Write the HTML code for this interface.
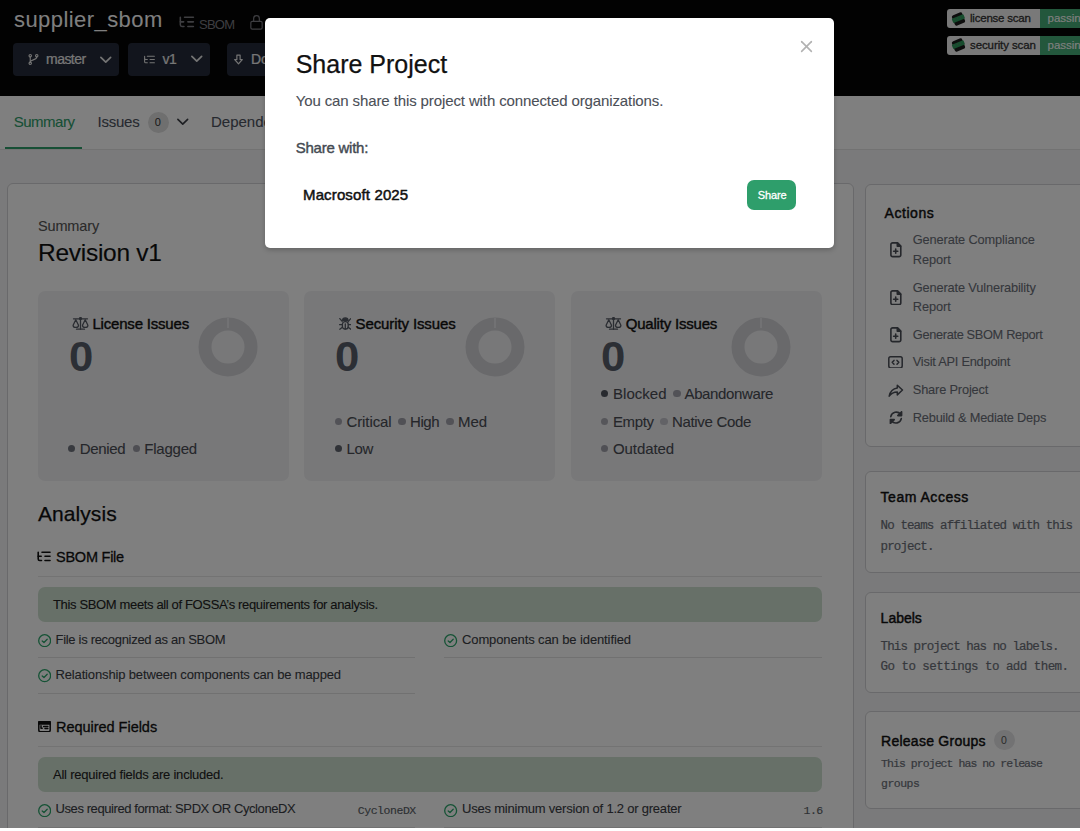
<!DOCTYPE html>
<html><head><meta charset="utf-8">
<style>
*{box-sizing:border-box;margin:0;padding:0}
html,body{width:1080px;height:831px;overflow:hidden;background:#fff;font-family:"Liberation Sans",sans-serif}
.abs{position:absolute}
.t{position:absolute;white-space:nowrap}
#page{position:absolute;left:0;top:0;width:1080px;height:828px;background:#f5f5f6;overflow:hidden}
#hdr{position:absolute;left:0;top:0;width:1080px;height:96px;background:#040404}
#tabs{position:absolute;left:0;top:96px;width:1080px;height:54px;background:#fff;border-bottom:1px solid #e4e4e4}
.card{position:absolute;background:#fff;border:1px solid #d2d2d6;border-radius:6px}
#ov{position:absolute;left:0;top:0;width:1080px;height:828px;background:rgba(0,0,0,.5)}
#modal{position:absolute;left:265px;top:18px;width:569px;height:230px;background:#fff;border-radius:5px;box-shadow:0 2px 5px rgba(0,0,0,.22)}
</style></head><body>
<div id="page">
<div id="hdr"></div><div id="tabs"></div>
<div class="card" style="left:7px;top:183px;width:847px;height:700px"></div>
<div class="card" style="left:865px;top:184px;width:240px;height:263px"></div>
<div class="card" style="left:865px;top:471px;width:240px;height:102px"></div>
<div class="card" style="left:865px;top:592px;width:240px;height:101px"></div>
<div class="card" style="left:865px;top:711px;width:240px;height:98px"></div>
<div class="abs" style="left:13px;top:43px;width:106px;height:33px;background:#252b3a;border-radius:4px"></div>
<div class="abs" style="left:128px;top:43px;width:82px;height:33px;background:#252b3a;border-radius:4px"></div>
<div class="abs" style="left:227px;top:43px;width:100px;height:33px;background:#252b3a;border-radius:4px"></div>
<div class="abs" style="left:946.5px;top:9.3px;width:140px;height:18.7px;background:#f2f2f2;border-radius:3px;overflow:hidden"></div>
<div class="abs" style="left:1040px;top:9.3px;width:60px;height:18.7px;background:#46ae78"></div>
<div class="abs" style="left:946.5px;top:36px;width:140px;height:18.6px;background:#f2f2f2;border-radius:3px"></div>
<div class="abs" style="left:1040px;top:36px;width:60px;height:18.6px;background:#46ae78"></div>
<div class="abs" style="left:5px;top:147px;width:77px;height:2px;background:#2e9e6b"></div>
<div class="abs" style="left:147.5px;top:111.5px;width:21px;height:21px;background:#dedede;border-radius:50%"></div>
<div class="abs" style="left:38px;top:290.6px;width:251px;height:190.4px;background:#f1f1f3;border-radius:7px"></div>
<div class="abs" style="left:304.3px;top:290.6px;width:251px;height:190.4px;background:#f1f1f3;border-radius:7px"></div>
<div class="abs" style="left:571px;top:290.6px;width:251px;height:190.4px;background:#f1f1f3;border-radius:7px"></div>
<div class="abs" style="left:68.0px;top:444.90000000000003px;width:7.4px;height:7.4px;background:#70757f;border-radius:50%"></div>
<div class="abs" style="left:132.70000000000002px;top:444.90000000000003px;width:7.4px;height:7.4px;background:#9c9ca6;border-radius:50%"></div>
<div class="abs" style="left:334.7px;top:417.90000000000003px;width:7.4px;height:7.4px;background:#a4a4ae;border-radius:50%"></div>
<div class="abs" style="left:398.2px;top:417.90000000000003px;width:7.4px;height:7.4px;background:#a0a0aa;border-radius:50%"></div>
<div class="abs" style="left:446.3px;top:417.90000000000003px;width:7.4px;height:7.4px;background:#a4a4ae;border-radius:50%"></div>
<div class="abs" style="left:334.7px;top:444.90000000000003px;width:7.4px;height:7.4px;background:#60656f;border-radius:50%"></div>
<div class="abs" style="left:601.0px;top:389.5px;width:7.4px;height:7.4px;background:#50555f;border-radius:50%"></div>
<div class="abs" style="left:673.3px;top:389.5px;width:7.4px;height:7.4px;background:#a4a4ae;border-radius:50%"></div>
<div class="abs" style="left:601.0px;top:417.90000000000003px;width:7.4px;height:7.4px;background:#acacb5;border-radius:50%"></div>
<div class="abs" style="left:660.3px;top:417.90000000000003px;width:7.4px;height:7.4px;background:#c4c4cc;border-radius:50%"></div>
<div class="abs" style="left:601.0px;top:444.90000000000003px;width:7.4px;height:7.4px;background:#a0a0aa;border-radius:50%"></div>
<div class="abs" style="left:38px;top:576px;width:784px;height:1px;background:#e6e6e6"></div>
<div class="abs" style="left:38px;top:586.5px;width:784px;height:35px;background:#cfe1d1;border-radius:7px"></div>
<div class="abs" style="left:38px;top:657px;width:377px;height:1px;background:#e3e3e3"></div>
<div class="abs" style="left:444px;top:657px;width:378px;height:1px;background:#e3e3e3"></div>
<div class="abs" style="left:38px;top:692.5px;width:377px;height:1px;background:#e3e3e3"></div>
<div class="abs" style="left:38px;top:746.4px;width:784px;height:1px;background:#e6e6e6"></div>
<div class="abs" style="left:38px;top:756.6px;width:784px;height:35px;background:#cfe1d1;border-radius:7px"></div>
<div class="abs" style="left:38px;top:826.6px;width:377px;height:1px;background:#e3e3e3"></div>
<div class="abs" style="left:444px;top:826.6px;width:378px;height:1px;background:#e3e3e3"></div>
<div class="abs" style="left:993.8px;top:729.7px;width:20.8px;height:20.8px;background:#e4e4e6;border-radius:50%"></div>
<svg class="abs" style="left:179px;top:15.8px;color:#7c7c82;" width="15.5" height="12.2" viewBox="0 0 14 11" fill="none" stroke="#7c7c82" stroke-width="1.4" stroke-linecap="round" stroke-linejoin="round"><path d="M5 1.2h8"/><path d="M8 5.3h5"/><path d="M8 9.5h5"/><path d="M1.2 1.2v6.8a1.5 1.5 0 0 0 1.5 1.5h1.8"/><path d="M1.2 5.3h3"/></svg>
<svg class="abs" style="left:248px;top:13px;color:#7c7c82;" width="17" height="18" viewBox="0 0 24 24" fill="none" stroke="#7c7c82" stroke-width="1.7" stroke-linecap="round" stroke-linejoin="round"><rect x="4" y="11" width="16" height="11" rx="2"/><path d="M8 11V7a4 4 0 0 1 8 0v4"/></svg>
<svg class="abs" style="left:27px;top:53px;color:#e8e8e8;" width="13" height="13" viewBox="0 0 24 24" fill="none" stroke="#e8e8e8" stroke-width="2.1" stroke-linecap="round" stroke-linejoin="round"><circle cx="6" cy="5" r="2.2"/><circle cx="6" cy="19" r="2.2"/><circle cx="18" cy="5" r="2.2"/><path d="M6 7.2v9.6"/><path d="M18 7.2c0 6.5-12 4.5-12 9.6"/></svg>
<svg class="abs" style="left:96.1px;top:50px;color:#e8e8e8;" width="19.5" height="19.5" viewBox="0 0 24 24" fill="none" stroke="#e8e8e8" stroke-width="2.1" stroke-linecap="round" stroke-linejoin="round"><path d="m6 9 6 6 6-6"/></svg>
<svg class="abs" style="left:142px;top:53px;color:#e8e8e8;" width="15" height="13" viewBox="0 0 24 24" fill="none" stroke="#e8e8e8" stroke-width="2" stroke-linecap="round" stroke-linejoin="round"><path d="M21 12h-8"/><path d="M21 6H8"/><path d="M21 18h-8"/><path d="M3 6v4c0 1.1.9 2 2 2h3"/><path d="M3 10v6c0 1.1.9 2 2 2h3"/></svg>
<svg class="abs" style="left:186.8px;top:49.4px;color:#e8e8e8;" width="19.5" height="19.5" viewBox="0 0 24 24" fill="none" stroke="#e8e8e8" stroke-width="2.1" stroke-linecap="round" stroke-linejoin="round"><path d="m6 9 6 6 6-6"/></svg>
<svg class="abs" style="left:232px;top:53px;color:#e8e8e8;" width="13" height="13" viewBox="0 0 24 24" fill="none" stroke="#e8e8e8" stroke-width="2.2" stroke-linecap="round" stroke-linejoin="round"><path d="M15 4v8h4l-7 8-7-8h4V4z"/></svg>
<svg class="abs" style="left:950.5px;top:11.5px" width="15" height="14" viewBox="0 0 15 14"><g transform="rotate(-22 7.5 7)"><rect x="2" y="1.5" width="11" height="11" rx="2" fill="#1a1a1a"/><rect x="1.2" y="4.2" width="12.6" height="4.8" rx="1" fill="#2f9a5c"/><circle cx="4" cy="5.8" r=".5" fill="#777"/><circle cx="7" cy="5.8" r=".5" fill="#777"/><circle cx="10" cy="6.8" r=".5" fill="#777"/></g></svg>
<svg class="abs" style="left:950.5px;top:38.2px" width="15" height="14" viewBox="0 0 15 14"><g transform="rotate(-22 7.5 7)"><rect x="2" y="1.5" width="11" height="11" rx="2" fill="#1a1a1a"/><rect x="1.2" y="4.2" width="12.6" height="4.8" rx="1" fill="#2f9a5c"/><circle cx="4" cy="5.8" r=".5" fill="#777"/><circle cx="7" cy="5.8" r=".5" fill="#777"/><circle cx="10" cy="6.8" r=".5" fill="#777"/></g></svg>
<svg class="abs" style="left:172.6px;top:111.5px;color:#3a3d44;" width="19.5" height="19.5" viewBox="0 0 24 24" fill="none" stroke="#3a3d44" stroke-width="2" stroke-linecap="round" stroke-linejoin="round"><path d="m6 9 6 6 6-6"/></svg>
<svg class="abs" style="left:71.8px;top:316.5px;color:#555a64;" width="17" height="13.5" viewBox="0 0 17 13.5" fill="none" stroke="#555a64" stroke-width="1.3" stroke-linecap="round" stroke-linejoin="round"><path d="M1.5 1.8h14"/><circle cx="8.5" cy="1.6" r="1" fill="currentColor"/><path d="M8.5 2.5v9.8"/><path d="M4.5 12.2h8"/><path d="M1.1 8.2L3.8 2.8L6.5 8.2a2.7 2.2 0 0 1-5.4 0Z"/><path d="M10.5 8.2L13.2 2.8L15.9 8.2a2.7 2.2 0 0 1-5.4 0Z"/></svg>
<svg class="abs" style="left:197.4px;top:315.5px" width="62" height="62" viewBox="0 0 62 62"><circle cx="31" cy="31" r="23" fill="none" stroke="#d3d3d7" stroke-width="13"/><line x1="31" y1="2" x2="31" y2="12" stroke="#f1f1f3" stroke-width="1.2"/></svg>
<svg class="abs" style="left:338.5px;top:316.5px;color:#555a64;" width="12.6" height="13.4" viewBox="0 0 12.6 13.4" fill="none" stroke="#555a64" stroke-width="1.3" stroke-linecap="round" stroke-linejoin="round"><path d="M3.6 3.3a2.7 2.4 0 0 1 5.4 0Z" fill="currentColor"/><rect x="3.4" y="4.6" width="5.8" height="7.4" rx="2.6"/><path d="M6.3 7v5"/><path d="M0.8 1.6l2.4 2.6"/><path d="M11.8 1.6l-2.4 2.6"/><path d="M0.6 7.6h2.6"/><path d="M12 7.6h-2.6"/><path d="M0.8 12.2l2.6-2"/><path d="M11.8 12.2l-2.6-2"/></svg>
<svg class="abs" style="left:463.6px;top:315.5px" width="62" height="62" viewBox="0 0 62 62"><circle cx="31" cy="31" r="23" fill="none" stroke="#d3d3d7" stroke-width="13"/><line x1="31" y1="2" x2="31" y2="12" stroke="#f1f1f3" stroke-width="1.2"/></svg>
<svg class="abs" style="left:604.5px;top:316.5px;color:#555a64;" width="17" height="13.5" viewBox="0 0 17 13.5" fill="none" stroke="#555a64" stroke-width="1.3" stroke-linecap="round" stroke-linejoin="round"><path d="M1.5 1.8h14"/><circle cx="8.5" cy="1.6" r="1" fill="currentColor"/><path d="M8.5 2.5v9.8"/><path d="M4.5 12.2h8"/><path d="M1.1 8.2L3.8 2.8L6.5 8.2a2.7 2.2 0 0 1-5.4 0Z"/><path d="M10.5 8.2L13.2 2.8L15.9 8.2a2.7 2.2 0 0 1-5.4 0Z"/></svg>
<svg class="abs" style="left:730.4px;top:315.5px" width="62" height="62" viewBox="0 0 62 62"><circle cx="31" cy="31" r="23" fill="none" stroke="#d3d3d7" stroke-width="13"/><line x1="31" y1="2" x2="31" y2="12" stroke="#f1f1f3" stroke-width="1.2"/></svg>
<svg class="abs" style="left:37.2px;top:550.5px;color:#111;" width="14" height="11" viewBox="0 0 14 11" fill="none" stroke="#111" stroke-width="1.6" stroke-linecap="round" stroke-linejoin="round"><path d="M5 1.2h8"/><path d="M8 5.3h5"/><path d="M8 9.5h5"/><path d="M1.2 1.2v6.8a1.5 1.5 0 0 0 1.5 1.5h1.8"/><path d="M1.2 5.3h3"/></svg>
<svg class="abs" style="left:37.9px;top:633.9px;color:#2aa56a;" width="13.3" height="13.3" viewBox="0 0 13.3 13.3" fill="none" stroke="#2aa56a" stroke-width="1.3" stroke-linecap="round" stroke-linejoin="round"><circle cx="6.65" cy="6.65" r="5.95"/><path d="M4.2 6.9l1.8 1.6l3.2-3.2"/></svg>
<svg class="abs" style="left:444.4px;top:633.9px;color:#2aa56a;" width="13.3" height="13.3" viewBox="0 0 13.3 13.3" fill="none" stroke="#2aa56a" stroke-width="1.3" stroke-linecap="round" stroke-linejoin="round"><circle cx="6.65" cy="6.65" r="5.95"/><path d="M4.2 6.9l1.8 1.6l3.2-3.2"/></svg>
<svg class="abs" style="left:37.9px;top:669.4px;color:#2aa56a;" width="13.3" height="13.3" viewBox="0 0 13.3 13.3" fill="none" stroke="#2aa56a" stroke-width="1.3" stroke-linecap="round" stroke-linejoin="round"><circle cx="6.65" cy="6.65" r="5.95"/><path d="M4.2 6.9l1.8 1.6l3.2-3.2"/></svg>
<svg class="abs" style="left:38px;top:720.5px;color:#111;" width="13" height="11.5" viewBox="0 0 13 11.5" fill="none" stroke="#111" stroke-width="1.5" stroke-linecap="round" stroke-linejoin="round"><rect x="0.8" y="0.8" width="11.4" height="9.9" rx="1.6"/><rect x="0.8" y="0.8" width="11.4" height="2.2" fill="currentColor"/><path d="M3 4.8v2.4h1.2"/><path d="M5.6 5.6h4.2"/><path d="M7 7.4h2.8"/></svg>
<svg class="abs" style="left:37.9px;top:803.5px;color:#2aa56a;" width="13.3" height="13.3" viewBox="0 0 13.3 13.3" fill="none" stroke="#2aa56a" stroke-width="1.3" stroke-linecap="round" stroke-linejoin="round"><circle cx="6.65" cy="6.65" r="5.95"/><path d="M4.2 6.9l1.8 1.6l3.2-3.2"/></svg>
<svg class="abs" style="left:444.4px;top:803.5px;color:#2aa56a;" width="13.3" height="13.3" viewBox="0 0 13.3 13.3" fill="none" stroke="#2aa56a" stroke-width="1.3" stroke-linecap="round" stroke-linejoin="round"><circle cx="6.65" cy="6.65" r="5.95"/><path d="M4.2 6.9l1.8 1.6l3.2-3.2"/></svg>
<svg class="abs" style="left:890px;top:242.0px;color:#4a4e57;" width="11.6" height="15.5" viewBox="0 0 11.6 15.5" fill="none" stroke="#4a4e57" stroke-width="1.6" stroke-linecap="round" stroke-linejoin="round"><path d="M7.6 0.9H2.6A1.7 1.7 0 0 0 0.9 2.6v10.3a1.7 1.7 0 0 0 1.7 1.7h6.5a1.7 1.7 0 0 0 1.7-1.7V4.1Z"/><path d="M7.3 1v3.3h3.3Z" fill="currentColor"/><path d="M3.6 9.2h4.2"/><path d="M5.7 7.1v4.2"/></svg>
<svg class="abs" style="left:890px;top:289.7px;color:#4a4e57;" width="11.6" height="15.5" viewBox="0 0 11.6 15.5" fill="none" stroke="#4a4e57" stroke-width="1.6" stroke-linecap="round" stroke-linejoin="round"><path d="M7.6 0.9H2.6A1.7 1.7 0 0 0 0.9 2.6v10.3a1.7 1.7 0 0 0 1.7 1.7h6.5a1.7 1.7 0 0 0 1.7-1.7V4.1Z"/><path d="M7.3 1v3.3h3.3Z" fill="currentColor"/><path d="M3.6 9.2h4.2"/><path d="M5.7 7.1v4.2"/></svg>
<svg class="abs" style="left:890px;top:327.0px;color:#4a4e57;" width="11.6" height="15.5" viewBox="0 0 11.6 15.5" fill="none" stroke="#4a4e57" stroke-width="1.6" stroke-linecap="round" stroke-linejoin="round"><path d="M7.6 0.9H2.6A1.7 1.7 0 0 0 0.9 2.6v10.3a1.7 1.7 0 0 0 1.7 1.7h6.5a1.7 1.7 0 0 0 1.7-1.7V4.1Z"/><path d="M7.3 1v3.3h3.3Z" fill="currentColor"/><path d="M3.6 9.2h4.2"/><path d="M5.7 7.1v4.2"/></svg>
<svg class="abs" style="left:888.2px;top:355.65px;color:#4a4e57;" width="15" height="12.7" viewBox="0 0 15 12.7" fill="none" stroke="#4a4e57" stroke-width="1.5" stroke-linecap="round" stroke-linejoin="round"><rect x="0.8" y="0.8" width="13.4" height="11.1" rx="1.8"/><path d="M6 4.4L4.2 6.35L6 8.3"/><path d="M9 4.4L10.8 6.35L9 8.3"/></svg>
<svg class="abs" style="left:888px;top:383.6px;color:#4a4e57;" width="15.7" height="13.4" viewBox="0 0 15.7 13.4" fill="none" stroke="#4a4e57" stroke-width="1.5" stroke-linecap="round" stroke-linejoin="round"><path d="M9.3 1.2v2.9C4.5 4.8 2 8.5 1.2 12.2c1.6-2.4 4.4-4.2 8.1-4.2v2.9l5.2-4.85Z"/></svg>
<svg class="abs" style="left:889px;top:411.0px;color:#4a4e57;" width="14" height="13.2" viewBox="0 0 14 13.2" fill="none" stroke="#4a4e57" stroke-width="1.6" stroke-linecap="round" stroke-linejoin="round"><path d="M1.8 5.6A5.6 5.6 0 0 1 11.6 3.2"/><path d="M12.3 7.6A5.6 5.6 0 0 1 2.5 10"/><path d="M12.6 0.8v3.8H8.8Z" fill="currentColor"/><path d="M1.4 12.4V8.6h3.8Z" fill="currentColor"/></svg>
<div class="t" style="left:14.00px;top:9.38px;font-size:22px;line-height:22px;color:#fff;font-family:'Liberation Sans', sans-serif;letter-spacing:0.432px;">supplier_sbom</div>
<div class="t" style="left:199.00px;top:17.60px;font-size:13px;line-height:13px;color:#7c7c82;font-family:'Liberation Sans', sans-serif;letter-spacing:-0.752px;">SBOM</div>
<div class="t" style="left:46.00px;top:51.95px;font-size:14px;line-height:14px;color:#eee;font-family:'Liberation Sans', sans-serif;-webkit-text-stroke:0.2px #eee;letter-spacing:-0.535px;">master</div>
<div class="t" style="left:162.50px;top:51.95px;font-size:14px;line-height:14px;color:#eee;font-family:'Liberation Sans', sans-serif;-webkit-text-stroke:0.2px #eee;letter-spacing:-0.6px;">v1</div>
<div class="t" style="left:251.00px;top:51.95px;font-size:14px;line-height:14px;color:#eee;font-family:'Liberation Sans', sans-serif;-webkit-text-stroke:0.2px #eee;">Download</div>
<div class="t" style="left:970.00px;top:13.27px;font-size:11.5px;line-height:11.5px;color:#333;font-family:'Liberation Sans', sans-serif;-webkit-text-stroke:0.3px #333;letter-spacing:-0.216px;">license scan</div>
<div class="t" style="left:970.00px;top:40.27px;font-size:11.5px;line-height:11.5px;color:#333;font-family:'Liberation Sans', sans-serif;-webkit-text-stroke:0.3px #333;letter-spacing:-0.099px;">security scan</div>
<div class="t" style="left:1047.50px;top:13.27px;font-size:11.5px;line-height:11.5px;color:#fff;font-family:'Liberation Sans', sans-serif;-webkit-text-stroke:0.1px #fff;">passing</div>
<div class="t" style="left:1047.50px;top:40.27px;font-size:11.5px;line-height:11.5px;color:#fff;font-family:'Liberation Sans', sans-serif;-webkit-text-stroke:0.1px #fff;">passing</div>
<div class="t" style="left:13.75px;top:114.05px;font-size:15px;line-height:15px;color:#2e9e6b;font-family:'Liberation Sans', sans-serif;-webkit-text-stroke:0.1px #2e9e6b;letter-spacing:-0.498px;">Summary</div>
<div class="t" style="left:97.50px;top:114.05px;font-size:15px;line-height:15px;color:#4d535e;font-family:'Liberation Sans', sans-serif;-webkit-text-stroke:0.1px #4d535e;letter-spacing:-0.232px;">Issues</div>
<div class="t" style="left:154.70px;top:116.69px;font-size:11px;line-height:11px;color:#333;font-family:'Liberation Sans', sans-serif;">0</div>
<div class="t" style="left:211.00px;top:114.05px;font-size:15px;line-height:15px;color:#4d535e;font-family:'Liberation Sans', sans-serif;-webkit-text-stroke:0.1px #4d535e;">Dependencies</div>
<div class="t" style="left:38.00px;top:219.43px;font-size:14.5px;line-height:14.5px;color:#555;font-family:'Liberation Sans', sans-serif;-webkit-text-stroke:0.1px #555;letter-spacing:-0.148px;">Summary</div>
<div class="t" style="left:38.00px;top:241.06px;font-size:24.5px;line-height:24.5px;color:#111;font-family:'Liberation Sans', sans-serif;-webkit-text-stroke:0.15px #111;letter-spacing:-0.268px;">Revision v1</div>
<div class="t" style="left:92.40px;top:316.10px;font-size:15px;line-height:15px;color:#111;font-family:'Liberation Sans', sans-serif;-webkit-text-stroke:0.4px #111;letter-spacing:-0.187px;">License Issues</div>
<div class="t" style="left:68.60px;top:335.95px;font-size:42px;line-height:42px;color:#585e6a;font-family:'Liberation Sans', sans-serif;font-weight:700;transform:scaleX(1.04);transform-origin:0 0;">0</div>
<div class="t" style="left:355.60px;top:316.10px;font-size:15px;line-height:15px;color:#111;font-family:'Liberation Sans', sans-serif;-webkit-text-stroke:0.4px #111;letter-spacing:-0.116px;">Security Issues</div>
<div class="t" style="left:334.80px;top:335.95px;font-size:42px;line-height:42px;color:#585e6a;font-family:'Liberation Sans', sans-serif;font-weight:700;transform:scaleX(1.04);transform-origin:0 0;">0</div>
<div class="t" style="left:625.70px;top:316.10px;font-size:15px;line-height:15px;color:#111;font-family:'Liberation Sans', sans-serif;-webkit-text-stroke:0.4px #111;letter-spacing:-0.194px;">Quality Issues</div>
<div class="t" style="left:601.10px;top:335.95px;font-size:42px;line-height:42px;color:#585e6a;font-family:'Liberation Sans', sans-serif;font-weight:700;transform:scaleX(1.04);transform-origin:0 0;">0</div>
<div class="t" style="left:79.80px;top:441.30px;font-size:15px;line-height:15px;color:#4a4d55;font-family:'Liberation Sans', sans-serif;-webkit-text-stroke:0.1px #4a4d55;letter-spacing:-0.369px;">Denied</div>
<div class="t" style="left:144.30px;top:441.30px;font-size:15px;line-height:15px;color:#4a4d55;font-family:'Liberation Sans', sans-serif;-webkit-text-stroke:0.1px #4a4d55;letter-spacing:-0.220px;">Flagged</div>
<div class="t" style="left:346.50px;top:414.30px;font-size:15px;line-height:15px;color:#4a4d55;font-family:'Liberation Sans', sans-serif;-webkit-text-stroke:0.1px #4a4d55;letter-spacing:-0.106px;">Critical</div>
<div class="t" style="left:410.00px;top:414.30px;font-size:15px;line-height:15px;color:#4a4d55;font-family:'Liberation Sans', sans-serif;-webkit-text-stroke:0.1px #4a4d55;letter-spacing:-0.453px;">High</div>
<div class="t" style="left:458.00px;top:414.30px;font-size:15px;line-height:15px;color:#4a4d55;font-family:'Liberation Sans', sans-serif;-webkit-text-stroke:0.1px #4a4d55;letter-spacing:-0.094px;">Med</div>
<div class="t" style="left:346.50px;top:441.30px;font-size:15px;line-height:15px;color:#4a4d55;font-family:'Liberation Sans', sans-serif;-webkit-text-stroke:0.1px #4a4d55;letter-spacing:-0.316px;">Low</div>
<div class="t" style="left:613.00px;top:385.90px;font-size:15px;line-height:15px;color:#4a4d55;font-family:'Liberation Sans', sans-serif;-webkit-text-stroke:0.1px #4a4d55;letter-spacing:0.021px;">Blocked</div>
<div class="t" style="left:684.50px;top:385.90px;font-size:15px;line-height:15px;color:#4a4d55;font-family:'Liberation Sans', sans-serif;-webkit-text-stroke:0.1px #4a4d55;letter-spacing:-0.368px;">Abandonware</div>
<div class="t" style="left:613.00px;top:414.30px;font-size:15px;line-height:15px;color:#4a4d55;font-family:'Liberation Sans', sans-serif;-webkit-text-stroke:0.1px #4a4d55;letter-spacing:-0.404px;">Empty</div>
<div class="t" style="left:672.00px;top:414.30px;font-size:15px;line-height:15px;color:#4a4d55;font-family:'Liberation Sans', sans-serif;-webkit-text-stroke:0.1px #4a4d55;letter-spacing:-0.325px;">Native Code</div>
<div class="t" style="left:613.00px;top:441.30px;font-size:15px;line-height:15px;color:#4a4d55;font-family:'Liberation Sans', sans-serif;-webkit-text-stroke:0.1px #4a4d55;letter-spacing:-0.088px;">Outdated</div>
<div class="t" style="left:38.00px;top:502.52px;font-size:21px;line-height:21px;color:#111;font-family:'Liberation Sans', sans-serif;-webkit-text-stroke:0.25px #111;letter-spacing:0.068px;">Analysis</div>
<div class="t" style="left:56.00px;top:549.73px;font-size:14.5px;line-height:14.5px;color:#111;font-family:'Liberation Sans', sans-serif;-webkit-text-stroke:0.3px #111;letter-spacing:-0.242px;">SBOM File</div>
<div class="t" style="left:53.00px;top:598.20px;font-size:13px;line-height:13px;color:#222;font-family:'Liberation Sans', sans-serif;-webkit-text-stroke:0.1px #222;letter-spacing:-0.354px;">This SBOM meets all of FOSSA’s requirements for analysis.</div>
<div class="t" style="left:55.50px;top:632.50px;font-size:13px;line-height:13px;color:#3a3d44;font-family:'Liberation Sans', sans-serif;-webkit-text-stroke:0.1px #3a3d44;letter-spacing:-0.301px;">File is recognized as an SBOM</div>
<div class="t" style="left:462.00px;top:632.50px;font-size:13px;line-height:13px;color:#3a3d44;font-family:'Liberation Sans', sans-serif;-webkit-text-stroke:0.1px #3a3d44;letter-spacing:-0.110px;">Components can be identified</div>
<div class="t" style="left:55.50px;top:668.00px;font-size:13px;line-height:13px;color:#3a3d44;font-family:'Liberation Sans', sans-serif;-webkit-text-stroke:0.1px #3a3d44;letter-spacing:-0.146px;">Relationship between components can be mapped</div>
<div class="t" style="left:56.00px;top:719.93px;font-size:14.5px;line-height:14.5px;color:#111;font-family:'Liberation Sans', sans-serif;-webkit-text-stroke:0.3px #111;letter-spacing:-0.029px;">Required Fields</div>
<div class="t" style="left:53.00px;top:768.00px;font-size:13px;line-height:13px;color:#222;font-family:'Liberation Sans', sans-serif;-webkit-text-stroke:0.1px #222;letter-spacing:-0.220px;">All required fields are included.</div>
<div class="t" style="left:55.50px;top:802.10px;font-size:13px;line-height:13px;color:#3a3d44;font-family:'Liberation Sans', sans-serif;-webkit-text-stroke:0.1px #3a3d44;letter-spacing:-0.409px;">Uses required format: SPDX OR CycloneDX</div>
<div class="t" style="left:0;width:415.80px;text-align:right;top:804.59px;font-size:11.5px;line-height:11.5px;color:#5b5f68;font-family:'Liberation Mono', monospace;-webkit-text-stroke:0.15px #5b5f68;letter-spacing:-0.45px;">CycloneDX</div>
<div class="t" style="left:462.00px;top:802.10px;font-size:13px;line-height:13px;color:#3a3d44;font-family:'Liberation Sans', sans-serif;-webkit-text-stroke:0.1px #3a3d44;letter-spacing:-0.215px;">Uses minimum version of 1.2 or greater</div>
<div class="t" style="left:0;width:822.80px;text-align:right;top:804.59px;font-size:11.5px;line-height:11.5px;color:#5b5f68;font-family:'Liberation Mono', monospace;-webkit-text-stroke:0.15px #5b5f68;letter-spacing:-0.45px;">1.6</div>
<div class="t" style="left:884.60px;top:206.45px;font-size:14px;line-height:14px;color:#111;font-family:'Liberation Sans', sans-serif;-webkit-text-stroke:0.45px #111;letter-spacing:0.533px;">Actions</div>
<div class="t" style="left:912.80px;top:234.16px;font-size:12.8px;line-height:12.8px;color:#6b6f78;font-family:'Liberation Sans', sans-serif;-webkit-text-stroke:0.1px #6b6f78;letter-spacing:-0.137px;">Generate Compliance</div>
<div class="t" style="left:912.80px;top:253.56px;font-size:12.8px;line-height:12.8px;color:#6b6f78;font-family:'Liberation Sans', sans-serif;-webkit-text-stroke:0.1px #6b6f78;letter-spacing:-0.080px;">Report</div>
<div class="t" style="left:912.80px;top:281.86px;font-size:12.8px;line-height:12.8px;color:#6b6f78;font-family:'Liberation Sans', sans-serif;-webkit-text-stroke:0.1px #6b6f78;letter-spacing:-0.149px;">Generate Vulnerability</div>
<div class="t" style="left:912.80px;top:301.26px;font-size:12.8px;line-height:12.8px;color:#6b6f78;font-family:'Liberation Sans', sans-serif;-webkit-text-stroke:0.1px #6b6f78;letter-spacing:-0.080px;">Report</div>
<div class="t" style="left:912.80px;top:328.86px;font-size:12.8px;line-height:12.8px;color:#6b6f78;font-family:'Liberation Sans', sans-serif;-webkit-text-stroke:0.1px #6b6f78;letter-spacing:-0.344px;">Generate SBOM Report</div>
<div class="t" style="left:912.80px;top:356.16px;font-size:12.8px;line-height:12.8px;color:#6b6f78;font-family:'Liberation Sans', sans-serif;-webkit-text-stroke:0.1px #6b6f78;letter-spacing:-0.234px;">Visit API Endpoint</div>
<div class="t" style="left:912.80px;top:384.26px;font-size:12.8px;line-height:12.8px;color:#6b6f78;font-family:'Liberation Sans', sans-serif;-webkit-text-stroke:0.1px #6b6f78;letter-spacing:-0.167px;">Share Project</div>
<div class="t" style="left:912.80px;top:411.76px;font-size:12.8px;line-height:12.8px;color:#6b6f78;font-family:'Liberation Sans', sans-serif;-webkit-text-stroke:0.1px #6b6f78;letter-spacing:-0.213px;">Rebuild &amp; Mediate Deps</div>
<div class="t" style="left:880.60px;top:490.45px;font-size:14px;line-height:14px;color:#111;font-family:'Liberation Sans', sans-serif;-webkit-text-stroke:0.45px #111;letter-spacing:0.514px;">Team Access</div>
<div class="t" style="left:880.60px;top:520.42px;font-size:12.5px;line-height:12.5px;color:#6b6f78;font-family:'Liberation Mono', monospace;-webkit-text-stroke:0.2px #6b6f78;letter-spacing:-0.895px;">No teams affiliated with this</div>
<div class="t" style="left:880.60px;top:541.22px;font-size:12.5px;line-height:12.5px;color:#6b6f78;font-family:'Liberation Mono', monospace;-webkit-text-stroke:0.2px #6b6f78;letter-spacing:-0.88px;">project.</div>
<div class="t" style="left:880.60px;top:610.65px;font-size:14px;line-height:14px;color:#111;font-family:'Liberation Sans', sans-serif;-webkit-text-stroke:0.45px #111;">Labels</div>
<div class="t" style="left:880.60px;top:640.62px;font-size:12.5px;line-height:12.5px;color:#6b6f78;font-family:'Liberation Mono', monospace;-webkit-text-stroke:0.2px #6b6f78;letter-spacing:-0.906px;">This project has no labels.</div>
<div class="t" style="left:880.60px;top:661.02px;font-size:12.5px;line-height:12.5px;color:#6b6f78;font-family:'Liberation Mono', monospace;-webkit-text-stroke:0.2px #6b6f78;letter-spacing:-0.540px;">Go to settings to add them.</div>
<div class="t" style="left:881.00px;top:733.95px;font-size:14px;line-height:14px;color:#111;font-family:'Liberation Sans', sans-serif;-webkit-text-stroke:0.45px #111;letter-spacing:0.265px;">Release Groups</div>
<div class="t" style="left:1001.00px;top:735.11px;font-size:10.5px;line-height:10.5px;color:#555;font-family:'Liberation Sans', sans-serif;">0</div>
<div class="t" style="left:881.00px;top:757.99px;font-size:11.5px;line-height:11.5px;color:#6b6f78;font-family:'Liberation Mono', monospace;-webkit-text-stroke:0.2px #6b6f78;letter-spacing:-0.939px;">This project has no release</div>
<div class="t" style="left:881.00px;top:777.79px;font-size:11.5px;line-height:11.5px;color:#6b6f78;font-family:'Liberation Mono', monospace;-webkit-text-stroke:0.2px #6b6f78;letter-spacing:-0.500px;">groups</div>
<div id="ov"></div>
</div>
<div id="modal"></div>
<div class="abs" style="left:746.7px;top:180px;width:49.3px;height:30.4px;background:#2e9e6b;border-radius:7px"></div>
<svg class="abs" style="left:799.5px;top:39.5px" width="13" height="13" viewBox="0 0 24 24" fill="none" stroke="#b2b2b2" stroke-width="2.8" stroke-linecap="round"><path d="M3 3l18 18"/><path d="M21 3L3 21"/></svg>
<div class="t" style="left:295.70px;top:52.14px;font-size:25px;line-height:25px;color:#111;font-family:'Liberation Sans', sans-serif;-webkit-text-stroke:0.25px #111;letter-spacing:0.003px;">Share Project</div>
<div class="t" style="left:295.70px;top:93.20px;font-size:15px;line-height:15px;color:#4b4f57;font-family:'Liberation Sans', sans-serif;-webkit-text-stroke:0.1px #4b4f57;letter-spacing:-0.112px;">You can share this project with connected organizations.</div>
<div class="t" style="left:295.70px;top:140.40px;font-size:15px;line-height:15px;color:#444a52;font-family:'Liberation Sans', sans-serif;-webkit-text-stroke:0.4px #444a52;letter-spacing:-0.235px;">Share with:</div>
<div class="t" style="left:303.00px;top:186.80px;font-size:15px;line-height:15px;color:#111;font-family:'Liberation Sans', sans-serif;-webkit-text-stroke:0.5px #111;letter-spacing:0.139px;">Macrosoft 2025</div>
<div class="t" style="left:757.80px;top:190.09px;font-size:11px;line-height:11px;color:#fff;font-family:'Liberation Sans', sans-serif;-webkit-text-stroke:0.3px #fff;letter-spacing:-0.120px;">Share</div>
</body></html>
